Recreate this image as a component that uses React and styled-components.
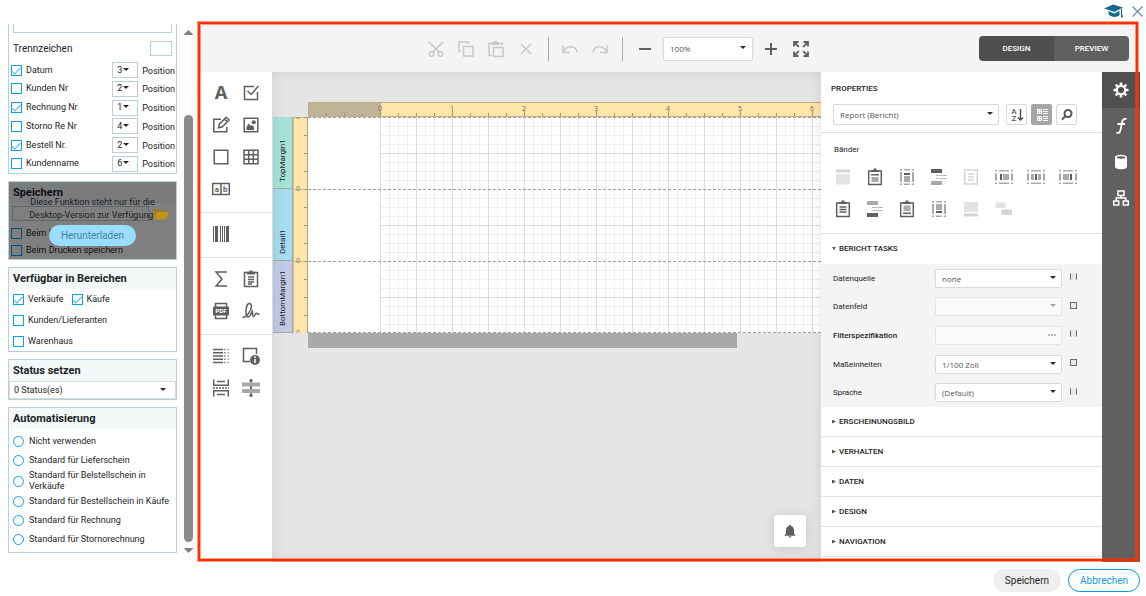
import React from "react";
import styled, { createGlobalStyle, css } from "styled-components";
import { MdNotifications } from "react-icons/md";

const GlobalStyle = createGlobalStyle`
  *, *::before, *::after { box-sizing: border-box; }
  body { margin: 0; background: #fff; color: #1c2326; font: 9px/11px Roboto, "Liberation Sans", sans-serif; }
  button, input, select { font: inherit; color: inherit; margin: 0; }
  button { padding: 0; border: 0; background: none; cursor: pointer; }
  h2, h3, p { margin: 0; font: inherit; }
`;

/* ---------- page frame ---------- */

const Page = styled.div`
  display: flex;
  flex-direction: column;
  height: 100vh;
  overflow: hidden;
`;

const TopBar = styled.header`
  display: flex;
  flex: none;
  justify-content: flex-end;
  align-items: center;
  gap: 7px;
  height: 22px;
  padding-right: 2px;
`;

const TopButton = styled.button`
  display: flex;
  color: ${(p) => p.$color};
`;

const Main = styled.main`
  display: flex;
  flex: 1;
  min-height: 0;
`;

const Footer = styled.footer`
  display: flex;
  flex: none;
  justify-content: flex-end;
  align-items: center;
  gap: 7px;
  height: 34px;
  padding: 3px 6px 0 0;
`;

const PillButton = styled.button`
  height: 23px;
  padding: 0 11px;
  border: 1px solid ${(p) => (p.$outline ? "#0095dc" : "#efefef")};
  border-radius: 12px;
  background: ${(p) => (p.$outline ? "#fff" : "#efefef")};
  color: ${(p) => (p.$outline ? "#0f9ce0" : "#1c1c1c")};
  font-size: 10px;
`;

/* ---------- left sidebar ---------- */

const Sidebar = styled.aside`
  display: flex;
  flex: none;
  gap: 4px;
  width: 198px;
  padding: 2px 2px 2px 8px;
`;

const PanelStack = styled.div`
  display: flex;
  flex: 1;
  flex-direction: column;
  gap: 7px;
  overflow: hidden;
`;

const Panel = styled.section`
  position: relative;
  flex: none;
  border: 1px solid #b9d0d9;
  ${(p) => p.$continued && "border-top: 0;"}
`;

const PanelTitle = styled.h2`
  height: 21px;
  padding-left: 4px;
  background: #f3f7f8;
  font-size: 11px;
  font-weight: 700;
  line-height: 21px;
`;

const ClippedField = styled.input`
  display: block;
  width: calc(100% - 8px);
  height: 9px;
  margin: 0 4px 8px;
  border: 1px solid #b9d0d9;
  border-top: 0;
`;

const SeparatorRow = styled.label`
  display: flex;
  justify-content: space-between;
  align-items: center;
  height: 15px;
  margin: 0 4px 6px;
  font-size: 10px;
`;

const SmallField = styled.input`
  width: 22px;
  height: 15px;
  border: 1px solid #b9d0d9;
`;

const PositionList = styled.div`
  display: flex;
  flex-direction: column;
  justify-content: space-between;
  height: 110px;
  margin-bottom: 1px;
`;

const PositionRow = styled.div`
  display: flex;
  align-items: center;
  gap: 4px;
  height: 16px;
  padding: 0 1px 0 2px;
`;

const PositionText = styled.span`
  padding-top: 2px;
`;

const OptionLabel = styled.label`
  display: flex;
  flex: ${(p) => (p.$grow ? 1 : "none")};
  align-items: center;
  gap: ${(p) => p.$gap || 4}px;
`;

const checkMark = css`
  &:checked::after {
    content: "";
    width: 9px;
    height: 4px;
    margin-top: -1px;
    border: solid #35b3f3;
    border-width: 0 0 1px 1px;
    transform: rotate(-45deg);
  }
`;

const Choice = styled.input`
  appearance: none;
  display: grid;
  flex: none;
  place-items: center;
  width: 11px;
  height: 11px;
  border: 1px solid #0aa2ee;
  border-radius: ${(p) => (p.type === "radio" ? "50%" : "0")};
  background: ${(p) => (p.$clear ? "transparent" : "#fff")};
  ${(p) => p.type === "checkbox" && checkMark}
`;

const SelectBox = styled.span`
  display: grid;
  flex: none;
  align-items: center;
  width: ${(p) => p.$w || "auto"};
  height: ${(p) => p.$h}px;

  & > * { grid-area: 1 / 1; }
  &::after {
    content: "";
    grid-area: 1 / 1;
    justify-self: end;
    margin: 0 ${(p) => p.$caret}px 2px 0;
    border: 3px solid transparent;
    border-top: 3px solid ${(p) => (p.$off ? "#a0a0a0" : "#2b2b2b")};
    border-bottom: 0;
    pointer-events: none;
    z-index: 0;
  }
`;

const Select = styled.select`
  appearance: none;
  width: 100%;
  height: 100%;
  padding: 0 0 0 ${(p) => p.$pad || 4}px;
  border: 1px solid ${(p) => p.$line || "#b9d0d9"};
  border-radius: ${(p) => p.$radius || 0}px;
  background: #fff;
  color: inherit;

  &:disabled {
    border-color: #e4e4e4;
    background: #fafafa;
    opacity: 1;
  }
`;

const SaveBody = styled.div`
  padding: 3px 2px 0;
`;

const PathRow = styled.div`
  display: flex;
  align-items: center;
  gap: 4px;
  height: 15px;
  margin: 0 5px 4px 1px;
`;

const FolderButton = styled.button`
  position: relative;
  z-index: 1;
  display: flex;
`;

const PathField = styled.input`
  flex: 1;
  min-width: 0;
  height: 15px;
  border: 1px solid #b9d0d9;
  background: transparent;
`;

const SaveRow = styled.div`
  display: flex;
  align-items: center;
  height: 17px;
`;

const LockCover = styled.div`
  position: absolute;
  inset: 0;
  display: flex;
  flex-direction: column;
  align-items: center;
  padding-top: 14px;
  background: rgba(0, 0, 0, 0.5);
  line-height: 13px;
  text-align: center;
`;

const DownloadButton = styled.button`
  height: 21px;
  margin-top: 3px;
  padding: 0 12px;
  border-radius: 11px;
  background: #99deff;
  color: #4d7f96;
  font-size: 10px;
`;

const AreaRows = styled.div`
  display: grid;
  grid-auto-rows: 20px;
  row-gap: 1px;
  padding-left: 4px;
`;

const AreaRow = styled.div`
  display: flex;
  gap: 8px;
`;

const RadioRows = styled.div`
  padding: 3px 4px;
`;

const RadioRow = styled.div`
  display: flex;
  align-items: center;
  min-height: 19px;
`;

const ScrollTrack = styled.div`
  display: flex;
  flex: none;
  flex-direction: column;
  align-items: center;
  width: 15px;
  padding: 6px 0 7px;
  background: #fcfcfc;
`;

const ScrollArrow = styled.button`
  width: 10px;
  height: 5px;
  background: #808080;
  clip-path: ${(p) =>
    p.$down ? "polygon(0 0, 100% 0, 50% 100%)" : "polygon(0 100%, 50% 0, 100% 100%)"};
`;

const ScrollThumb = styled.div`
  flex: 1;
  width: 9px;
  margin: 80px 0 6px;
  border-radius: 5px;
  background: #8b8b8b;
`;

/* ---------- report designer ---------- */

const Designer = styled.section`
  position: relative;
  display: flex;
  flex: 1;
  flex-direction: column;
  min-width: 0;
  margin-right: 6px;
  color: #333;
  font-size: 8px;

  &::after {
    content: "";
    position: absolute;
    inset: 0 2px 1px 0;
    border: 2px solid #ff2f00;
    box-shadow: 0 0 0 1px rgba(255, 60, 20, 0.5), inset 0 0 0 1px rgba(255, 60, 20, 0.5);
    pointer-events: none;
  }
`;

const Toolbar = styled.div`
  display: flex;
  flex: none;
  align-items: center;
  justify-content: flex-end;
  height: 50px;
  margin-right: 2px;
  padding: 3px 9px 0 0;
  background: #f4f4f4;
`;

const ToolbarGroup = styled.div`
  display: flex;
  align-items: center;
  margin-right: 163px;
`;

const IconButton = styled.button`
  display: grid;
  place-items: center;
  width: ${(p) => p.$w || 30}px;
  height: ${(p) => p.$h || 32}px;
  color: ${(p) => (p.$off ? "#c8c8c8" : "#5f5f5f")};
`;

const ToolbarRule = styled.span`
  width: 1px;
  height: 24px;
  margin: 0 6px 0 7px;
  background: #a8a8a8;
`;

const ZoomSlot = styled.span`
  display: flex;
  margin: 0 3px 0 4px;
  color: #555;
  font-family: "Open Sans", sans-serif;
`;

const ModeSwitch = styled.div`
  display: flex;
  height: 25px;
  overflow: hidden;
  border-radius: 4px;
`;

const ModeButton = styled.button`
  width: 75px;
  background: ${(p) => (p.$on ? "#4f4f4f" : "#606060")};
  color: #fff;
  font-weight: 500;
`;

const Workspace = styled.div`
  display: flex;
  flex: 1;
  min-height: 0;
`;

const Toolbox = styled.div`
  flex: none;
  width: 74px;
  padding-left: 2px;
  background: #fff;
`;

const ToolGroup = styled.div`
  display: flex;
  flex-wrap: wrap;
  padding: 5px 6px 7px;
  border-bottom: 1px solid #e2e2e2;
  &:last-child { border-bottom: 0; }
`;

const Surface = styled.div`
  position: relative;
  flex: 1;
  min-width: 0;
  padding: 30px 0 0 1px;
  overflow: hidden;
  background: #e5e5e5;

  &::after {
    content: "";
    position: absolute;
    inset: 0;
    box-shadow: inset 0 0 14px rgba(0, 0, 0, 0.1);
    pointer-events: none;
  }
`;

const TopRuler = styled.div`
  display: flex;
  height: 15px;
  margin-left: 35px;
  padding-left: 36px;
  overflow: hidden;
  border: 1px solid #bfae80;
  border-right: 0;
  background:
    repeating-linear-gradient(90deg, #97948c 0 1px, transparent 1px 72px) 71px 100% / 100% 5px no-repeat,
    repeating-linear-gradient(90deg, #97948c 0 1px, transparent 1px 18px) -1px 100% / 100% 3px no-repeat,
    linear-gradient(90deg, #bfb495 72px, #ffe5a8 72px);
  color: #6d6a62;
  font: 7px/11px "Open Sans", sans-serif;
`;

const TopRulerMark = styled.span`
  flex: none;
  width: 72px;
  margin-left: -1px;
  margin-right: 1px;
  text-align: center;
`;

const BandArea = styled.div`
  display: flex;
  height: 216px;
`;

const BandLabels = styled.div`
  display: flex;
  flex: none;
  flex-direction: column;
  width: 20px;
`;

const BandLabel = styled.div`
  display: flex;
  flex: 1;
  align-items: center;
  padding-top: 6px;
  border-left: 1px solid #a9a9a9;
  border-top: 1px solid #a9a9a9;
  background: ${(p) => p.$color};
  color: #222;
  font-size: 8px;
  line-height: 20px;
  writing-mode: vertical-rl;
  transform: rotate(180deg);
`;

const SideRuler = styled.div`
  flex: none;
  width: 15px;
  overflow: hidden;
  border-right: 1px solid #aaa08a;
  border-left: 1px solid #cdbf96;
  background:
    repeating-linear-gradient(180deg, #97948c 0 1px, transparent 1px 18px) 100% 0 / 3px 100% no-repeat,
    repeating-linear-gradient(180deg, #c5b68c 0 1px, transparent 1px 72px),
    #ffe5a8;
`;

const SideRulerMarks = styled.div`
  display: grid;
  grid-auto-rows: 72px;
  align-items: center;
  margin-top: -36px;
  padding-left: 2px;
  color: #77736a;
  font: 7px/8px "Open Sans", sans-serif;
`;

const Bands = styled.div`
  flex: 1;
  min-width: 0;
`;

const Band = styled.div`
  height: 72px;
  border-top: 1px dashed #a0a0a0;
  &:last-child { border-bottom: 1px dashed #a0a0a0; }
  background:
    linear-gradient(#fff, #fff) 0 0 / 72px 100% no-repeat,
    repeating-linear-gradient(90deg, #dcdcdc 0 1px, transparent 1px 36px),
    repeating-linear-gradient(180deg, transparent 0 35px, #dcdcdc 35px 36px),
    repeating-linear-gradient(90deg, #efefef 0 1px, transparent 1px 9px),
    repeating-linear-gradient(180deg, transparent 0 8px, #efefef 8px 9px),
    #fff;
`;

const PageEnd = styled.div`
  width: 429px;
  height: 15px;
  margin-left: 35px;
  background: #a9a9a9;
`;

const BellButton = styled.button`
  position: absolute;
  right: 15px;
  bottom: 15px;
  z-index: 1;
  display: grid;
  place-items: center;
  width: 32px;
  height: 32px;
  border-radius: 3px;
  background: #fff;
  box-shadow: 0 1px 12px rgba(0, 0, 0, 0.15);
  color: #5f5f5f;
`;

/* ---------- properties ---------- */

const Properties = styled.div`
  flex: none;
  width: 281px;
  overflow: hidden;
  background: #fff;
`;

const PropertiesHead = styled.div`
  height: 61px;
  padding: 11px 25px 0 12px;
  border-bottom: 1px solid #e0e0e0;
`;

const PropertiesTitle = styled.h2`
  margin: 0 0 10px -2px;
  color: #222;
  font-weight: 500;
`;

const PickerRow = styled.div`
  display: flex;
  gap: 4px;
  height: 21px;
  color: #555;
  font-family: "Open Sans", sans-serif;
  & > :first-child { flex: 1; margin-right: 3px; }
`;

const SquareButton = styled.button`
  display: grid;
  place-items: center;
  width: 21px;
  height: 21px;
  border: 1px solid ${(p) => (p.$on ? "#a6a6a6" : "#d9d9d9")};
  border-radius: 2px;
  background: ${(p) => (p.$on ? "#a6a6a6" : "#fff")};
  color: ${(p) => (p.$on ? "#fff" : "#555")};
`;

const BandPicker = styled.div`
  padding: 11px 12px 8px 6px;
  border-bottom: 1px solid #e0e0e0;
`;

const BandPickerTitle = styled.h3`
  padding-left: 7px;
  margin-bottom: 6px;
  color: #222;
`;

const BandIcons = styled.div`
  display: grid;
  grid-template-columns: repeat(8, 32px);
`;

const SectionHeader = styled.button`
  display: flex;
  align-items: center;
  gap: 3px;
  width: 100%;
  height: 30px;
  padding-left: 11px;
  border-bottom: 1px solid ${(p) => (p.$open ? "transparent" : "#e2e2e2")};
  color: #222;
  font-weight: 500;

  &::before {
    content: "";
    width: 4px;
    height: 4px;
    background: #555;
    clip-path: ${(p) =>
      p.$open ? "polygon(0 0, 100% 0, 50% 100%)" : "polygon(0 0, 100% 50%, 0 100%)"};
  }
`;

const PropertyRows = styled.div`
  display: flex;
  flex-direction: column;
  height: 143px;
  background: #f4f4f4;
`;

const PropertyRow = styled.div`
  display: grid;
  flex: 1;
  grid-template-columns: 102px 127px 15px;
  align-items: center;
  padding-left: 12px;
`;

const PropertyLabel = styled.label`
  color: #222;
  font-weight: ${(p) => (p.$strong ? 500 : 400)};
`;

const ValueFont = styled.span`
  display: block;
  color: #555;
  font-family: "Open Sans", sans-serif;
`;

const EllipsisField = styled.button`
  display: flex;
  align-items: center;
  justify-content: flex-end;
  gap: 1px;
  width: 100%;
  height: 19px;
  padding-right: 5px;
  border: 1px solid #e4e4e4;
  border-radius: 2px;
  background: #fafafa;
`;

const EllipsisDot = styled.i`
  width: 2px;
  height: 2px;
  background: #b8b8b8;
`;

const PropertyMark = styled.button`
  width: 7px;
  height: 7px;
  margin: 0 0 3px 8px;
  border: 1px solid #6a6a6a;
  background: #e8e8e8;
  ${(p) => p.$sides && "border-top-color: transparent; border-bottom-color: transparent;"}
`;

const NavRail = styled.nav`
  flex: none;
  width: 38px;
  background: #606060;
`;

const NavButton = styled.button`
  display: grid;
  place-items: center;
  width: 38px;
  height: 36px;
  background: ${(p) => (p.$on ? "#505050" : "transparent")};
  color: #fff;
`;

/* ---------- drawings ---------- */

const Svg = ({ children, size = 24, sw = 1.5 }) => (
  <svg width={size} height={size} viewBox={`0 0 ${size} ${size}`} fill="none" stroke="currentColor" strokeWidth={sw} aria-hidden="true">
    {children}
  </svg>
);
const Fill = ({ d, c = "currentColor" }) => <path d={d} fill={c} stroke="none" />;

const icons = {
  cut: (
    <Svg>
      <circle cx="7.5" cy="17" r="2.3" />
      <circle cx="16.5" cy="17" r="2.3" />
      <path d="M5 5l10.3 10.2M19 5L8.7 15.2" />
    </Svg>
  ),
  copy: (
    <Svg>
      <path d="M9.500 9.500h9.500v9.500H9.500zM6.500 14.500H5V5h9.500v1.800" />
    </Svg>
  ),
  paste: (
    <Svg>
      <path d="M9.500 10.500h9.500v9H9.500zM7.500 18.500H5V6.500h3M15 6.500h3.500v2" />
      <Fill d="M8 5h2V4h3v1h2v3H8z" />
    </Svg>
  ),
  remove: <Svg><path d="M7 7l10 10M17 7L7 17" /></Svg>,
  undo: <Svg><path d="M5 8.500v7h7M5.500 15C8 8.500 17.500 7.500 19 15.500" /></Svg>,
  redo: <Svg><path d="M19 8.500v7h-7M18.500 15C16 8.500 6.500 7.500 5 15.500" /></Svg>,
  minus: <Svg sw={2}><path d="M7 12h12" /></Svg>,
  plus: <Svg sw={2}><path d="M6 12h12M12 6v12" /></Svg>,
  full: (
    <Svg sw={1.8}>
      <path d="M9.500 5H5v4.500M5 5l4.800 4.800M14.500 5H19v4.500M19 5l-4.800 4.800M9.500 19H5v-4.500M5 19l4.800-4.800M14.500 19H19v-4.500M19 19l-4.800-4.800" />
    </Svg>
  ),
  label: (
    <svg width="24" height="24" viewBox="0 0 24 24" aria-hidden="true">
      <text x="12" y="18" textAnchor="middle" fontFamily="Liberation Mono, monospace" fontWeight="700" fontSize="21" fill="currentColor">A</text>
    </svg>
  ),
  check: <Svg><path d="M15 5.500H5.500v13h13V11M8.500 10l3.500 3.500 7.500-8.500" /></Svg>,
  edit: <Svg><path d="M12 6.200H4.800v12.600h13V14M9.500 14.800l.8-3.600 7-7 2.800 2.800-7 7zM15.500 6l2.800 2.800" /></Svg>,
  image: (
    <Svg>
      <path d="M5.200 5.200h13.600v13.600H5.200z" />
      <Fill d="M7.500 17v-3l2-3.500L12 13l1-1 2 2v3z" />
      <circle cx="14.800" cy="9.200" r="2" fill="currentColor" stroke="none" />
    </Svg>
  ),
  panel: <Svg><path d="M5.200 5.200h13.600v13.600H5.200z" /></Svg>,
  table: <Svg><path d="M5 5.200h14v13.600H5zM5 9.700h14M5 14.300h14M9.700 5v14M14.300 5v14" /></Svg>,
  comb: (
    <svg width="24" height="24" viewBox="0 0 24 24" aria-hidden="true">
      <path d="M3.700 6.500h16.600v11H3.700zM12 6v12" fill="none" stroke="currentColor" strokeWidth="1.500" />
      <text x="7.900" y="15" textAnchor="middle" fontFamily="Roboto" fontWeight="700" fontSize="8" fill="currentColor">a</text>
      <text x="16.200" y="15" textAnchor="middle" fontFamily="Roboto" fontWeight="700" fontSize="8" fill="currentColor">b</text>
    </svg>
  ),
  barcode: (
    <Svg>
      <Fill d="M4 4h1v16H4zM6 4h3v16H6zM11 4h1v16h-1zM13 4h1v16h-1zM15 4h1v16h-1zM17 4h3v16h-3z" />
    </Svg>
  ),
  sum: <Svg><path d="M18 5H7l6 7-6 7h11" /></Svg>,
  clipboard: (
    <Svg>
      <path d="M8 5.500H5.500v14h13v-14H16M9 10h6M9 12.500h6M9 15h6M9 17h4" />
      <Fill d="M8 4.500h2.500v-1h3v1H16v3H8z" />
    </Svg>
  ),
  pdf: (
    <svg width="24" height="24" viewBox="0 0 24 24" aria-hidden="true">
      <path d="M6.500 8V4.500h11V8M6.500 16v3.500h11V16" fill="none" stroke="currentColor" strokeWidth="1.500" />
      <rect x="4" y="7.500" width="16" height="9" rx="1" fill="currentColor" />
      <text x="12" y="14.300" textAnchor="middle" fontFamily="Roboto" fontWeight="700" fontSize="6" fill="#fff">PDF</text>
    </svg>
  ),
  sign: <Svg><path d="M3.300 18.500c3.700 0 9-6.500 9.200-11.200.1-3.800-4-3.800-5 .7-1 4.500-.7 10 1.500 10 2 0 3.300-4 4.300-6 .8 1.800-.5 5 1 5.500 1.500.2 1.700-3.200 3-3.200s.6 1.700 3.200.7" /></Svg>,
  toc: (
    <Svg>
      <path d="M4 5.500h10M4 8.700h10M4 12h10M4 15.300h10M4 18.500h10" />
      <path d="M15 5.500h2M18.500 5.500h1.500M15 8.700h2M18.500 8.700h1.500M15 12h2M18.500 12h1.500M15 15.300h2M18.500 15.300h1.500M15 18.500h2M18.500 18.500h1.500" opacity=".6" />
    </Svg>
  ),
  info: (
    <Svg>
      <path d="M11 17.500H4.500v-13h13V10" />
      <circle cx="16" cy="16" r="5" fill="currentColor" stroke="none" />
      <path d="M16 12.300v1.700M16 15v4" stroke="#fff" />
    </Svg>
  ),
  pageBreak: (
    <Svg>
      <path d="M4.700 3.500v5.800h14.600V3.500M8 5.500h8M4.700 20.500v-5.800h14.600v5.800M8 18.500h8" />
      <path d="M4 12h16" strokeDasharray="2 1" />
    </Svg>
  ),
  crossBand: (
    <Svg>
      <path d="M12 3.500v17" />
      <circle cx="12" cy="4.500" r="1.600" fill="currentColor" stroke="none" />
      <circle cx="12" cy="19.500" r="1.600" fill="currentColor" stroke="none" />
      <Fill d="M3 6.500h18v4H3zM3 13h18v4H3z" c="#a9a9a9" />
      <path d="M12 10.500V13" />
    </Svg>
  ),
  sort: (
    <svg width="16" height="16" viewBox="0 0 16 16" aria-hidden="true">
      <text x="5" y="7" textAnchor="middle" fontFamily="Roboto" fontWeight="500" fontSize="8" fill="currentColor">A</text>
      <text x="5" y="14" textAnchor="middle" fontFamily="Roboto" fontWeight="500" fontSize="8" fill="currentColor">Z</text>
      <path d="M11.500 2v11M9 10.500l2.500 2.500 2.500-2.500" fill="none" stroke="currentColor" strokeWidth="1.500" />
    </svg>
  ),
  category: (
    <Svg size={16} sw={1}>
      <path d="M3.500 2.500h4v4h-4zM3.500 9.500h4v4h-4zM4 4.500h3M5.500 3v3M4 11.500h3M5.500 10v3M9 2.500h5M9 4.500h5M9 6.500h5M9 9.500h5M9 11.500h5M9 13.500h5" />
    </Svg>
  ),
  search: <Svg size={16} sw={2}><circle cx="9" cy="6.500" r="3.500" /><path d="M6.500 9L3 12.500" /></Svg>,
  gear: (
    <Svg>
      <circle cx="12" cy="12" r="4.200" strokeWidth="2.200" />
      <path d="M12 4.500V7M12 17v2.500M4.500 12H7M17 12h2.500M6.700 6.700l1.700 1.700M15.600 15.600l1.700 1.700M17.300 6.700l-1.700 1.700M8.400 15.600l-1.700 1.700" strokeWidth="2.600" />
    </Svg>
  ),
  fx: <Svg sw={1.8}><path d="M17.500 5.200c-3-1-4 .8-4.500 3.300l-1.500 7.500c-.5 2.500-1.500 3.500-4 2.700M8.500 10h7.500" /></Svg>,
  data: (
    <Svg>
      <Fill d="M6 7.500C6 3.800 18 3.800 18 7.500v9c0 3.700-12 3.700-12 0z" />
      <ellipse cx="12" cy="7.500" rx="4.200" ry="1.200" fill="#606060" stroke="none" />
    </Svg>
  ),
  tree: <Svg><path d="M9 5h6v4.500H9zM4.700 15h5v4h-5zM14.300 15h5v4h-5zM12 9.500V12M7.200 15v-3h9.600v3" /></Svg>,
};

const L = "#d4d4d4";
const M = "#a9a9a9";
const D = "#5f5f5f";

const Clip = ({ children }) => (
  <Svg>
    <path d="M8 6H5.700v13.500h12.600V6H16" stroke={D} />
    <Fill d="M8 5h2.500V3.500h3V5H16v2H8z" c={D} />
    {children}
  </Svg>
);
const GroupBand = ({ dark, light }) => (
  <Svg>
    <Fill c={M} d="M5 4h2v1.500H5zM9 4h6v1.500H9zM17 4h2v1.500h-2zM5 18.500h2V20H5zM9 18.500h6V20H9zM17 18.500h2V20h-2zM5 7h2v10H5zM17 7h2v10h-2z" />
    <Fill c={D} d={`M9 ${dark}h6v2H9z`} />
    <Fill c={M} d={`M9 ${light}h6v6H9z`} />
  </Svg>
);
const VerticalBand = ({ x }) => (
  <Svg>
    <Fill c={M} d="M4 5h2v1.500H4zM8 5h10v1.500H8zM20 5h2v1.500h-2zM4 17.500h2V19H4zM8 17.500h10V19H8zM20 17.500h2V19h-2zM4 8.500h2v7H4zM8 9h10v6H8zM20 8.500h2v7h-2z" />
    <Fill c={D} d={`M${x} 9h2v6h-2z`} />
    <path d={`M${x - 0.5} 8.500v7M${x + 2.5} 8.500v7`} stroke="#fff" strokeWidth="1" />
  </Svg>
);
const SubBand = ({ top }) => (
  <Svg>
    <Fill c={top ? D : M} d="M4 4h11v4H4z" />
    <Fill c={top ? M : D} d="M4 16h11v4H4z" />
    <Fill c="#bcbcbc" d="M9 10h11v1H9zM9 13h11v1H9z" />
  </Svg>
);

const bandIcons = [
  ["Oberer Rand", <Svg><Fill c={L} d="M5 4.500h14v3H5z" /><Fill c="#e3e3e3" d="M5 9h14v10.500H5z" /></Svg>],
  ["Berichtskopf", <Clip><Fill c={D} d="M8 9h8v1.500H8z" /><Fill c={M} d="M8.500 12h7v5h-7z" /></Clip>],
  ["Gruppenkopf", <GroupBand dark={8} light={11} />],
  ["Unterband oben", <SubBand top />],
  ["Detail", <Svg><path d="M5.700 5h12.600v14H5.700z" stroke={L} /><path d="M9 9h6M9 12h6M9 15h6" stroke={L} /></Svg>],
  ["Vertikaler Kopf", <VerticalBand x={9} />],
  ["Vertikales Detail", <VerticalBand x={12} />],
  ["Vertikale Summe", <VerticalBand x={15} />],
  ["Detailbericht", <Clip><path d="M8.500 10h7M8.500 12.500h7M8.500 15h7" stroke={D} /></Clip>],
  ["Unterband unten", <SubBand />],
  ["Berichtsfuß", <Clip><Fill c={M} d="M8.500 8.500h7v5.500h-7z" /><Fill c={D} d="M8 15.500h8V17H8z" /></Clip>],
  ["Gruppenfuß", <GroupBand dark={14} light={7} />],
  ["Unterer Rand", <Svg><Fill c="#e3e3e3" d="M5 5h14v10H5z" /><Fill c={L} d="M5 16.500h14v3H5z" /></Svg>],
  ["Subband", <Svg><Fill c="#e3e3e3" d="M4.500 5.500h10v5.500h-10z" /><Fill c={L} d="M10.500 12.500H21V18H10.500z" /></Svg>],
];

/* ---------- data ---------- */

const positions = [
  ["Datum", "3", true],
  ["Kunden Nr", "2", false],
  ["Rechnung Nr", "1", true],
  ["Storno Re Nr", "4", false],
  ["Bestell Nr.", "2", true],
  ["Kundenname", "6", false],
];

const automation = [
  "Nicht verwenden",
  "Standard für Lieferschein",
  "Standard für Belstellschein in Verkäufe",
  "Standard für Bestellschein in Käufe",
  "Standard für Rechnung",
  "Standard für Stornorechnung",
];

const toolGroups = [
  ["label", "check", "edit", "image", "panel", "table", "comb"],
  ["barcode"],
  ["sum", "clipboard", "pdf", "sign"],
  ["toc", "info", "pageBreak", "crossBand"],
];

const properties = [
  { label: "Datenquelle", value: "none", sides: true },
  { label: "Datenfeld", value: "", off: true },
  { label: "Filterspezifikation", ellipsis: true, off: true, strong: true, sides: true },
  { label: "Maßeinheiten", value: "1/100 Zoll" },
  { label: "Sprache", value: "(Default)", sides: true },
];

function Check({ label, gap, grow, checked, clear }) {
  return (
    <OptionLabel $gap={gap} $grow={grow}>
      <Choice type="checkbox" defaultChecked={checked} $clear={clear} />
      {label}
    </OptionLabel>
  );
}

function LeftPanels() {
  return (
    <Sidebar>
      <PanelStack>
        <Panel $continued>
          <ClippedField aria-label="Dateiname" />
          <SeparatorRow>
            Trennzeichen
            <SmallField />
          </SeparatorRow>
          <PositionList>
            {positions.map(([name, pos, on]) => (
              <PositionRow key={name}>
                <Check label={name} checked={on} grow />
                <SelectBox $w="26px" $h={16} $caret={9}>
                  <Select aria-label={`${name} Position`} defaultValue={pos}>
                    <option>{pos}</option>
                  </Select>
                </SelectBox>
                <PositionText>Position</PositionText>
              </PositionRow>
            ))}
          </PositionList>
        </Panel>

        <Panel>
          <PanelTitle>Speichern</PanelTitle>
          <SaveBody>
            <PathRow>
              <PathField aria-label="Pfad" />
              <FolderButton aria-label="Ordner wählen">
                <svg width="16" height="12" viewBox="0 0 16 12" aria-hidden="true">
                  <path d="M1 11V1h4l1 1.500h7V5" fill="#a27a10" />
                  <path d="M1 11.500L3.500 4H16l-2.500 7.500z" fill="#bd931c" />
                </svg>
              </FolderButton>
            </PathRow>
            <SaveRow><Check label="Beim Speichern" clear /></SaveRow>
            <SaveRow><Check label="Beim Drucken speichern" clear /></SaveRow>
          </SaveBody>
          <LockCover>
            <p>Diese Funktion steht nur für die<br />Desktop-Version zur Verfügung.</p>
            <DownloadButton>Herunterladen</DownloadButton>
          </LockCover>
        </Panel>

        <Panel>
          <PanelTitle>Verfügbar in Bereichen</PanelTitle>
          <AreaRows>
            <AreaRow>
              <Check label="Verkäufe" checked />
              <Check label="Käufe" checked />
            </AreaRow>
            <AreaRow><Check label="Kunden/Lieferanten" /></AreaRow>
            <AreaRow><Check label="Warenhaus" /></AreaRow>
          </AreaRows>
        </Panel>

        <Panel>
          <PanelTitle>Status setzen</PanelTitle>
          <SelectBox $h={18} $caret={10}>
            <Select aria-label="Status setzen" $line="#d5dcdf">
              <option>0 Status(es)</option>
            </Select>
          </SelectBox>
        </Panel>

        <Panel>
          <PanelTitle>Automatisierung</PanelTitle>
          <RadioRows>
            {automation.map((text) => (
              <RadioRow key={text}>
                <OptionLabel $gap={5} $grow>
                  <Choice type="radio" name="automation" />
                  <span>{text}</span>
                </OptionLabel>
              </RadioRow>
            ))}
          </RadioRows>
        </Panel>
      </PanelStack>
      <ScrollTrack>
        <ScrollArrow aria-label="Nach oben" />
        <ScrollThumb />
        <ScrollArrow $down aria-label="Nach unten" />
      </ScrollTrack>
    </Sidebar>
  );
}

function DesignerToolbar() {
  const tool = (name, off) => (
    <IconButton aria-label={name} $off={off} disabled={off}>{icons[name]}</IconButton>
  );
  return (
    <Toolbar>
      <ToolbarGroup>
        {tool("cut", true)}
        {tool("copy", true)}
        {tool("paste", true)}
        {tool("remove", true)}
        <ToolbarRule />
        {tool("undo", true)}
        {tool("redo", true)}
        <ToolbarRule />
        {tool("minus")}
        <ZoomSlot>
          <SelectBox $w="90px" $h={24} $caret={7}>
            <Select aria-label="Zoom" $pad={6} $line="#d9d9d9" $radius={2}>
              <option>100%</option>
            </Select>
          </SelectBox>
        </ZoomSlot>
        {tool("plus")}
        {tool("full")}
      </ToolbarGroup>
      <ModeSwitch>
        <ModeButton $on>DESIGN</ModeButton>
        <ModeButton>PREVIEW</ModeButton>
      </ModeSwitch>
    </Toolbar>
  );
}

function ReportSurface() {
  return (
    <Surface>
      <TopRuler>
        {[0, 1, 2, 3, 4, 5, 6].map((n) => <TopRulerMark key={n}>{n}</TopRulerMark>)}
      </TopRuler>
      <BandArea>
        <BandLabels>
          <BandLabel $color="#a5e2da">TopMargin1</BandLabel>
          <BandLabel $color="#a5dcee">Detail1</BandLabel>
          <BandLabel $color="#c0c9e6">BottomMargin1</BandLabel>
        </BandLabels>
        <SideRuler>
          <SideRulerMarks>
            <span>0</span><span>0</span><span>0</span><span>0</span>
          </SideRulerMarks>
        </SideRuler>
        <Bands>
          <Band />
          <Band />
          <Band />
        </Bands>
      </BandArea>
      <PageEnd />
      <BellButton aria-label="Benachrichtigungen"><MdNotifications size={16} /></BellButton>
    </Surface>
  );
}

function PropertyPanel() {
  return (
    <Properties>
      <PropertiesHead>
        <PropertiesTitle>PROPERTIES</PropertiesTitle>
        <PickerRow>
          <SelectBox $h={21} $caret={6}>
            <Select aria-label="Element" $pad={6} $line="#d9d9d9" $radius={2}>
              <option>Report (Bericht)</option>
            </Select>
          </SelectBox>
          <SquareButton aria-label="Sortieren">{icons.sort}</SquareButton>
          <SquareButton $on aria-label="Kategorien">{icons.category}</SquareButton>
          <SquareButton aria-label="Suchen">{icons.search}</SquareButton>
        </PickerRow>
      </PropertiesHead>
      <BandPicker>
        <BandPickerTitle>Bänder</BandPickerTitle>
        <BandIcons>
          {bandIcons.map(([name, icon]) => (
            <IconButton key={name} $w={32} aria-label={name}>{icon}</IconButton>
          ))}
        </BandIcons>
      </BandPicker>
      <SectionHeader $open>BERICHT TASKS</SectionHeader>
      <PropertyRows>
        {properties.map((p) => (
          <PropertyRow key={p.label}>
            <PropertyLabel htmlFor={p.label} $strong={p.strong}>{p.label}</PropertyLabel>
            <ValueFont>
              {p.ellipsis ? (
                <EllipsisField id={p.label} disabled>
                  <EllipsisDot /><EllipsisDot /><EllipsisDot />
                </EllipsisField>
              ) : (
                <SelectBox $h={19} $caret={6} $off={p.off}>
                  <Select id={p.label} disabled={p.off} $pad={6} $line="#d9d9d9" $radius={2}>
                    <option>{p.value}</option>
                  </Select>
                </SelectBox>
              )}
            </ValueFont>
            <PropertyMark $sides={p.sides} aria-label={`${p.label} Optionen`} />
          </PropertyRow>
        ))}
      </PropertyRows>
      {["ERSCHEINUNGSBILD", "VERHALTEN", "DATEN", "DESIGN", "NAVIGATION"].map((name) => (
        <SectionHeader key={name}>{name}</SectionHeader>
      ))}
    </Properties>
  );
}

export default function App() {
  return (
    <Page>
      <GlobalStyle />
      <TopBar>
        <TopButton $color="#126a8c" aria-label="Hilfe">
          <svg width="20" height="15" viewBox="0 0 20 15" fill="currentColor" aria-hidden="true">
            <path d="M0 4.500L9 .5 19 3.500 10.500 8z" />
            <path d="M4.500 7.200l6 2.300 5-2.700v4.500c-3 2.500-8 2.200-11-1z" />
            <path d="M17 4.500l1 .2v5l1 3.300-2 .8z" />
          </svg>
        </TopButton>
        <TopButton $color="#6b86a5" aria-label="Schließen">
          <svg width="13" height="13" viewBox="0 0 13 13" fill="none" stroke="currentColor" strokeWidth="1.200" aria-hidden="true">
            <path d="M1.500 1.500l10 10M11.500 1.500l-10 10" />
          </svg>
        </TopButton>
      </TopBar>
      <Main>
        <LeftPanels />
        <Designer>
          <DesignerToolbar />
          <Workspace>
            <Toolbox>
              {toolGroups.map((group, i) => (
                <ToolGroup key={i}>
                  {group.map((name) => (
                    <IconButton key={name} aria-label={name}>{icons[name]}</IconButton>
                  ))}
                </ToolGroup>
              ))}
            </Toolbox>
            <ReportSurface />
            <PropertyPanel />
            <NavRail>
              <NavButton $on aria-label="Eigenschaften">{icons.gear}</NavButton>
              <NavButton aria-label="Ausdrücke">{icons.fx}</NavButton>
              <NavButton aria-label="Feldliste">{icons.data}</NavButton>
              <NavButton aria-label="Berichtsexplorer">{icons.tree}</NavButton>
            </NavRail>
          </Workspace>
        </Designer>
      </Main>
      <Footer>
        <PillButton>Speichern</PillButton>
        <PillButton $outline>Abbrechen</PillButton>
      </Footer>
    </Page>
  );
}
